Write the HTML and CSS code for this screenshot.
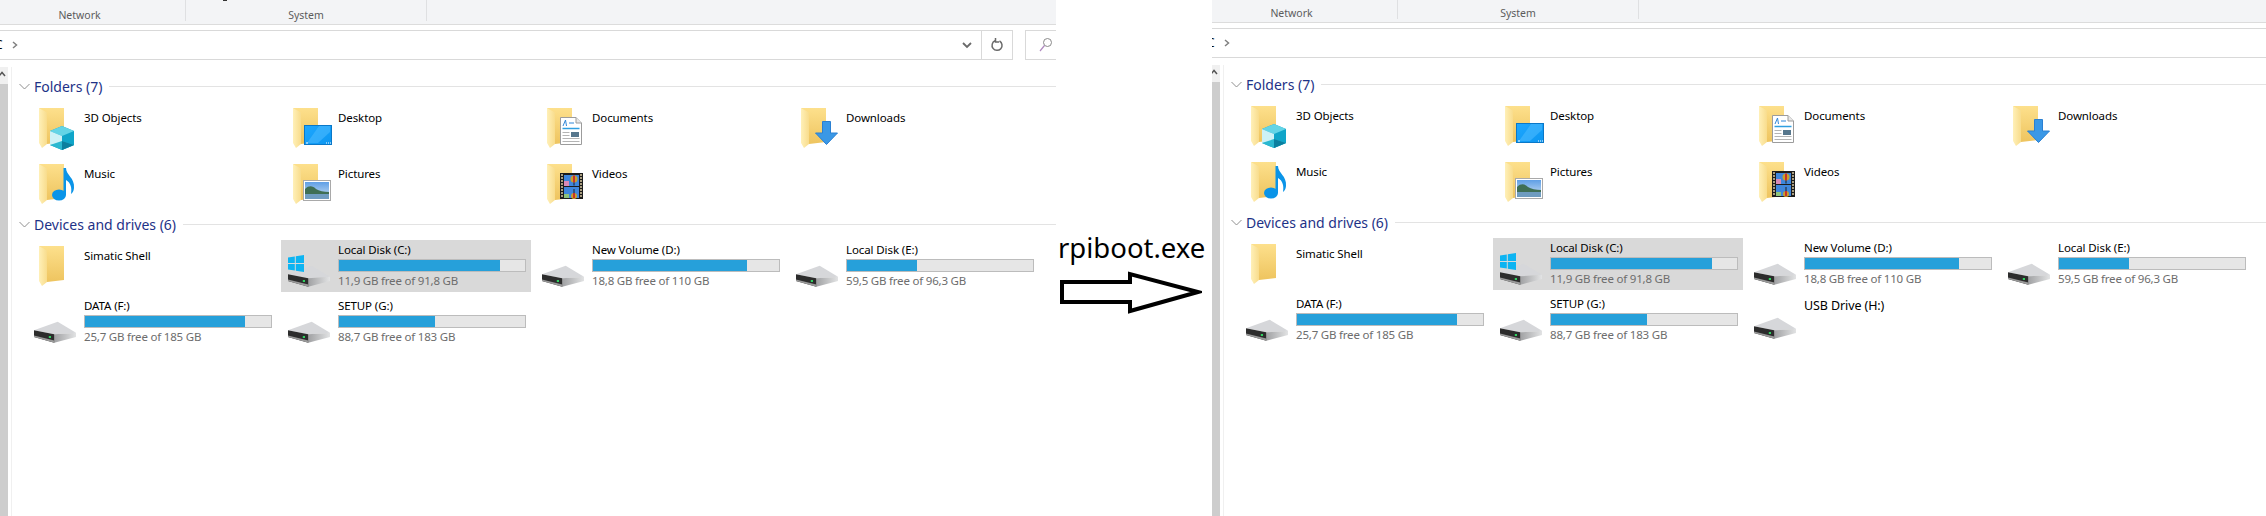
FILE: index.html
```html
<!DOCTYPE html>
<html lang="en">
<head>
<meta charset="utf-8">
<title>rpiboot.exe before and after</title>
<link rel="stylesheet" href="styles.css">
</head>
<body>
<svg class="defs" aria-hidden="true">
  <defs>
    <linearGradient id="g-back" x1="0" y1="0" x2="0" y2="1"><stop offset="0" stop-color="#fde08c"/><stop offset="1" stop-color="#eec45f"/></linearGradient>
    <linearGradient id="g-flap" x1="0" y1="0" x2="1" y2="0"><stop offset="0" stop-color="#fff0b8"/><stop offset="1" stop-color="#f8dc8c"/></linearGradient>
    <linearGradient id="g-desk" x1="0" y1="0" x2="1" y2="1"><stop offset="0" stop-color="#1ea7ff"/><stop offset="1" stop-color="#0c96f0"/></linearGradient>
    <linearGradient id="g-side" x1="0" y1="0" x2="1" y2="0"><stop offset="0" stop-color="#a0a1a3"/><stop offset="1" stop-color="#e2e3e4"/></linearGradient>
    <linearGradient id="g-sky" x1="0" y1="0" x2="0" y2="1"><stop offset="0" stop-color="#5f9fe6"/><stop offset="1" stop-color="#cfe2f3"/></linearGradient>
    <symbol id="folder" viewBox="0 0 50 44" overflow="visible">
      <path d="M5 0H30V34L13 36Z" fill="url(#g-back)"/>
      <path d="M5 0L13 4.500V36L8 40L5 35Z" fill="url(#g-flap)"/>
    </symbol>
    <symbol id="cube" viewBox="0 0 50 44">
      <path d="M28 18L40 23V37L28 42L16 37V23Z" fill="#0fa5c9"/>
      <path d="M28 18L40 23L28 28L16 23Z" fill="#63d4e6"/>
      <path d="M16 23L28 28V36L16 37Z" fill="#cdf1f6"/>
      <path d="M16 37L28 33L40 37L28 42Z" fill="#2bb8d0"/>
      <path d="M28 33L40 37L28 42Z" fill="#0b7f9f"/>
    </symbol>
    <symbol id="screen" viewBox="0 0 50 44">
      <rect x="16.500" y="17.500" width="27" height="19" fill="url(#g-desk)" stroke="#0a78c8"/>
      <path d="M19 35L31 18H42V24L30 35Z" fill="#4fbcff" opacity=".55"/>
      <path d="M18 35h2M38 35h1M40 35h1M42 35h1" stroke="#fff"/>
    </symbol>
    <symbol id="note" viewBox="0 0 50 44">
      <ellipse cx="25" cy="31" rx="7" ry="5.500" fill="#0a94e8"/>
      <path d="M29.500 31V4H32C32 11 41 14 40 24C39.800 27 38.500 29 37 30C38 24 37 19 32 16V31Z" fill="#0a94e8"/>
    </symbol>
    <symbol id="photo" viewBox="0 0 50 44">
      <rect x="15.500" y="16.500" width="27" height="20" fill="#fff" stroke="#a9a9a9"/>
      <rect x="17" y="18" width="24" height="17" fill="url(#g-sky)"/>
      <path d="M17 25C21 21 25 22 28 25C31 27 36 28 41 28V30H17Z" fill="#3f6f55"/>
      <rect x="17" y="30" width="24" height="5" fill="#6f9cc0"/>
    </symbol>
    <symbol id="doc" viewBox="0 0 50 44">
      <path d="M18.500 9.500H34L39.500 15V36.500H18.500Z" fill="#fff" stroke="#9c9c9c"/>
      <path d="M34 9.500V15H39.500" fill="#e8e8e8" stroke="#9c9c9c"/>
      <path d="M21 18L23.500 12L24.500 18M27 15h5" stroke="#2f86d8" fill="none"/>
      <path d="M20.500 20.500H37.500" stroke="#2f9fe0" stroke-width="1.500"/>
      <path d="M20.500 24.500h7M20.500 27.500h7M20.500 30.500h17M20.500 33.500h17" stroke="#b4b4b4"/>
      <rect x="29" y="24" width="8" height="5" fill="#56768c"/>
    </symbol>
    <symbol id="down" viewBox="0 0 50 44">
      <path d="M26.500 13.500H34.500V25H41.500L30.500 36.500L19.500 25H26.500Z" fill="#3a98e6" stroke="#2a80d2"/>
    </symbol>
    <symbol id="film" viewBox="0 0 50 44">
      <rect x="18" y="9" width="23" height="26" fill="#1c1c1c"/>
      <rect x="22" y="11" width="15" height="11" fill="#3f86dc"/>
      <rect x="22" y="23" width="15" height="11" fill="#3f86dc"/>
      <rect x="22" y="17" width="5" height="5" fill="#d98ab8"/>
      <rect x="22" y="30" width="5" height="4" fill="#8fc47a"/>
      <circle cx="32" cy="15" r="3.500" fill="#c9a02a"/>
      <path d="M31 11.500h2v7h-2z" fill="#c8322a"/>
      <path d="M32 18.500v3M32 29v-4" stroke="#222"/>
      <circle cx="32" cy="32" r="3" fill="#c9a02a"/>
      <path d="M31 29h2v5h-2z" fill="#c8322a"/>
      <path d="M19 11h2M19 14h2M19 17h2M19 20h2M19 23h2M19 26h2M19 29h2M19 32h2M38 11h2M38 14h2M38 17h2M38 20h2M38 23h2M38 26h2M38 29h2M38 32h2" stroke="#d8c8a0" stroke-width="1.400"/>
    </symbol>
    <symbol id="drive" viewBox="0 0 50 44">
      <path d="M0 28.300L23.700 19.700L42 30.700L20.300 32.300Z" fill="#d6d7da"/>
      <path d="M20.300 32.300L42 30.700V35L20.300 40.700Z" fill="url(#g-side)"/>
      <path d="M0 28.300L20.300 32.300V40.700L0 35Z" fill="#2c2c2c"/>
      <path d="M0 33.500L20.300 38.500V40.700L0 35Z" fill="#9a9a9a"/>
      <rect x="14.800" y="34" width="2.200" height="2" fill="#30d060"/>
    </symbol>
    <symbol id="win" viewBox="0 0 50 44">
      <path d="M0 11.500L6.800 10.400V17H0ZM7.800 10.200L16 9V17H7.800ZM0 18H6.800V24.500L0 23.500ZM7.800 18H16V26L7.800 24.800Z" fill="#0db4f2"/>
    </symbol>
  </defs>
</svg>

<main class="page">
  <section class="pane pane-before">
    <div class="ribbon ribbon-tall">
      <div class="ribbon-group ribbon-net"><span class="tick"></span>Network</div>
      <div class="ribbon-group ribbon-sys">System</div>
    </div>
    <div class="nav">
      <div class="address">
        <span class="crumb">C</span>
        <svg class="crumb-arrow" viewBox="0 0 6 8"><path d="M1 1L4.500 4L1 7" fill="none" stroke="#808080" stroke-width="1.500"/></svg>
        <span class="grow"></span>
        <svg class="drop" viewBox="0 0 10 7"><path d="M1 1L5 5L9 1" fill="none" stroke="#6a6a6a" stroke-width="1.800"/></svg>
        <span class="refresh"><svg viewBox="0 0 14 16"><path d="M5 3.800A5 5 0 1 0 9.500 4M5.500 1V5H9" fill="none" stroke="#6a6a6a" stroke-width="1.500"/></svg></span>
      </div>
      <div class="search"><svg viewBox="0 0 14 16"><circle cx="8.500" cy="5.500" r="4" fill="none" stroke="#8a8a8a"/><path d="M5.500 8.500L1 14" stroke="#b08ac0" stroke-width="1.200"/></svg></div>
    </div>
    <div class="body">
      <div class="scrollbar"><div class="scroll-up"><svg viewBox="0 0 8 6"><path d="M-1 5L2 1.500L5 5" fill="none" stroke="#555" stroke-width="1.500"/></svg></div></div>
      <div class="view">
        <h2 class="group-head"><svg class="fold" viewBox="0 0 11 7"><path d="M.5 1L5.500 6L10.500 1" fill="none" stroke="#8f8f8f"/></svg><span>Folders (7)</span><i></i></h2>
        <div class="grid">
          <div class="item"><svg class="icon" viewBox="0 0 50 44"><use href="#folder"/><use href="#cube"/></svg><div class="text"><div class="name">3D Objects</div></div></div>
          <div class="item"><svg class="icon" viewBox="0 0 50 44"><use href="#folder"/><use href="#screen"/></svg><div class="text"><div class="name">Desktop</div></div></div>
          <div class="item"><svg class="icon" viewBox="0 0 50 44"><use href="#folder"/><use href="#doc"/></svg><div class="text"><div class="name">Documents</div></div></div>
          <div class="item"><svg class="icon" viewBox="0 0 50 44"><use href="#folder"/><use href="#down"/></svg><div class="text"><div class="name">Downloads</div></div></div>
          <div class="item"><svg class="icon" viewBox="0 0 50 44"><use href="#folder"/><use href="#note"/></svg><div class="text"><div class="name">Music</div></div></div>
          <div class="item"><svg class="icon" viewBox="0 0 50 44"><use href="#folder"/><use href="#photo"/></svg><div class="text"><div class="name">Pictures</div></div></div>
          <div class="item"><svg class="icon" viewBox="0 0 50 44"><use href="#folder"/><use href="#film"/></svg><div class="text"><div class="name">Videos</div></div></div>
        </div>
        <h2 class="group-head group-next"><svg class="fold" viewBox="0 0 11 7"><path d="M.5 1L5.500 6L10.500 1" fill="none" stroke="#8f8f8f"/></svg><span>Devices and drives (6)</span><i></i></h2>
        <div class="grid">
          <div class="item"><svg class="icon" viewBox="0 0 50 44"><use href="#folder"/></svg><div class="text"><div class="name">Simatic Shell</div></div></div>
          <div class="item drive selected"><svg class="icon" viewBox="0 0 50 44"><use href="#drive"/><use href="#win"/></svg><div class="text"><div class="name">Local Disk (C:)</div><div class="bar"><div class="fill" style="width:86.8%"></div></div><div class="sub">11,9 GB free of 91,8 GB</div></div></div>
          <div class="item drive"><svg class="icon" viewBox="0 0 50 44"><use href="#drive"/></svg><div class="text"><div class="name">New Volume (D:)</div><div class="bar"><div class="fill" style="width:83%"></div></div><div class="sub">18,8 GB free of 110 GB</div></div></div>
          <div class="item drive"><svg class="icon" viewBox="0 0 50 44"><use href="#drive"/></svg><div class="text"><div class="name">Local Disk (E:)</div><div class="bar"><div class="fill" style="width:37.4%"></div></div><div class="sub">59,5 GB free of 96,3 GB</div></div></div>
          <div class="item drive"><svg class="icon" viewBox="0 0 50 44"><use href="#drive"/></svg><div class="text"><div class="name">DATA (F:)</div><div class="bar"><div class="fill" style="width:85.8%"></div></div><div class="sub">25,7 GB free of 185 GB</div></div></div>
          <div class="item drive"><svg class="icon" viewBox="0 0 50 44"><use href="#drive"/></svg><div class="text"><div class="name">SETUP (G:)</div><div class="bar"><div class="fill" style="width:51.7%"></div></div><div class="sub">88,7 GB free of 183 GB</div></div></div>
        </div>
      </div>
    </div>
  </section>

  <aside class="middle">
    <div class="caption">rpiboot.exe</div>
    <svg class="arrow" viewBox="0 0 143 45"><path d="M3 12H71V4L139 22L71 41V32H3Z" fill="#fff" stroke="#000" stroke-width="4"/></svg>
  </aside>

  <section class="pane pane-after">
    <div class="ribbon">
      <div class="ribbon-group ribbon-net">Network</div>
      <div class="ribbon-group ribbon-sys">System</div>
    </div>
    <div class="nav">
      <div class="address address-open">
        <span class="crumb">C</span>
        <svg class="crumb-arrow" viewBox="0 0 6 8"><path d="M1 1L4.500 4L1 7" fill="none" stroke="#808080" stroke-width="1.500"/></svg>
      </div>
    </div>
    <div class="body">
      <div class="scrollbar"><div class="scroll-up"><svg viewBox="0 0 8 6"><path d="M-1 5L2 1.500L5 5" fill="none" stroke="#555" stroke-width="1.500"/></svg></div></div>
      <div class="view">
        <h2 class="group-head"><svg class="fold" viewBox="0 0 11 7"><path d="M.5 1L5.500 6L10.500 1" fill="none" stroke="#8f8f8f"/></svg><span>Folders (7)</span><i></i></h2>
        <div class="grid">
          <div class="item"><svg class="icon" viewBox="0 0 50 44"><use href="#folder"/><use href="#cube"/></svg><div class="text"><div class="name">3D Objects</div></div></div>
          <div class="item"><svg class="icon" viewBox="0 0 50 44"><use href="#folder"/><use href="#screen"/></svg><div class="text"><div class="name">Desktop</div></div></div>
          <div class="item"><svg class="icon" viewBox="0 0 50 44"><use href="#folder"/><use href="#doc"/></svg><div class="text"><div class="name">Documents</div></div></div>
          <div class="item"><svg class="icon" viewBox="0 0 50 44"><use href="#folder"/><use href="#down"/></svg><div class="text"><div class="name">Downloads</div></div></div>
          <div class="item"><svg class="icon" viewBox="0 0 50 44"><use href="#folder"/><use href="#note"/></svg><div class="text"><div class="name">Music</div></div></div>
          <div class="item"><svg class="icon" viewBox="0 0 50 44"><use href="#folder"/><use href="#photo"/></svg><div class="text"><div class="name">Pictures</div></div></div>
          <div class="item"><svg class="icon" viewBox="0 0 50 44"><use href="#folder"/><use href="#film"/></svg><div class="text"><div class="name">Videos</div></div></div>
        </div>
        <h2 class="group-head group-next"><svg class="fold" viewBox="0 0 11 7"><path d="M.5 1L5.500 6L10.500 1" fill="none" stroke="#8f8f8f"/></svg><span>Devices and drives (6)</span><i></i></h2>
        <div class="grid">
          <div class="item"><svg class="icon" viewBox="0 0 50 44"><use href="#folder"/></svg><div class="text"><div class="name">Simatic Shell</div></div></div>
          <div class="item drive selected"><svg class="icon" viewBox="0 0 50 44"><use href="#drive"/><use href="#win"/></svg><div class="text"><div class="name">Local Disk (C:)</div><div class="bar"><div class="fill" style="width:86.8%"></div></div><div class="sub">11,9 GB free of 91,8 GB</div></div></div>
          <div class="item drive"><svg class="icon" viewBox="0 0 50 44"><use href="#drive"/></svg><div class="text"><div class="name">New Volume (D:)</div><div class="bar"><div class="fill" style="width:83%"></div></div><div class="sub">18,8 GB free of 110 GB</div></div></div>
          <div class="item drive"><svg class="icon" viewBox="0 0 50 44"><use href="#drive"/></svg><div class="text"><div class="name">Local Disk (E:)</div><div class="bar"><div class="fill" style="width:37.4%"></div></div><div class="sub">59,5 GB free of 96,3 GB</div></div></div>
          <div class="item drive"><svg class="icon" viewBox="0 0 50 44"><use href="#drive"/></svg><div class="text"><div class="name">DATA (F:)</div><div class="bar"><div class="fill" style="width:85.8%"></div></div><div class="sub">25,7 GB free of 185 GB</div></div></div>
          <div class="item drive"><svg class="icon" viewBox="0 0 50 44"><use href="#drive"/></svg><div class="text"><div class="name">SETUP (G:)</div><div class="bar"><div class="fill" style="width:51.7%"></div></div><div class="sub">88,7 GB free of 183 GB</div></div></div>
          <div class="item drive drive-empty"><svg class="icon" viewBox="0 0 50 44"><use href="#drive"/></svg><div class="text"><div class="name">USB Drive (H:)</div></div></div>
        </div>
      </div>
    </div>
  </section>
</main>
</body>
</html>
```
FILE: styles.css
```css
html, body {
  margin: 0;
  background: #fff;
}
body {
  width: 2266px;
  height: 516px;
  overflow: hidden;
  font-family: "Noto Sans", "Open Sans", sans-serif;
  font-size: 11.5px;
  color: #000;
}
.defs {
  position: absolute;
  width: 0;
  height: 0;
}
.page {
  display: flex;
  height: 516px;
}
.pane {
  display: flex;
  flex-direction: column;
  overflow: hidden;
  flex: none;
}
.pane-before { width: 1056px; }
.pane-after { width: 1054px; }

/* ribbon */
.ribbon {
  display: flex;
  flex: none;
  height: 22px;
  background: #f3f4f6;
  border-bottom: 1px solid #dcdcdc;
}
.ribbon-tall { height: 24px; }
.ribbon-group {
  position: relative;
  height: 19px;
  box-sizing: border-box;
  padding-top: 5px;
  text-align: center;
  line-height: 16px;
  font-size: 10.5px;
  color: #5c5c5c;
  border-right: 1px solid #dfe0e2;
}
.ribbon-tall .ribbon-group {
  height: 21px;
  padding-top: 7px;
}
.ribbon-net { width: 186px; padding-right: 26px; }
.ribbon-sys { width: 241px; }
.tick {
  position: absolute;
  top: 0;
  left: 223px;
  width: 4px;
  height: 1px;
  background: #333;
}

/* navigation bar */
.nav {
  display: flex;
  flex: none;
  gap: 12px;
  height: 30px;
  margin-top: 5px;
}
.address {
  display: flex;
  align-items: center;
  width: 1013px;
  box-sizing: border-box;
  border: 1px solid #d9d9d9;
  border-left: 0;
}
.address-open {
  width: 100%;
  border-right: 0;
}
.crumb {
  margin-left: -5px;
  width: 12px;
  font-size: 12px;
  line-height: 16px;
}
.crumb-arrow {
  width: 6px;
  height: 8px;
  margin-left: 5px;
}
.grow { flex: 1; }
.drop {
  width: 10px;
  height: 7px;
  margin-right: 9px;
}
.refresh {
  display: flex;
  align-items: center;
  justify-content: center;
  width: 30px;
  height: 28px;
  border-left: 1px solid #d9d9d9;
}
.refresh svg {
  width: 14px;
  height: 16px;
}
.search {
  display: flex;
  align-items: center;
  justify-content: flex-end;
  flex: 1;
  box-sizing: border-box;
  padding-right: 3px;
  border: 1px solid #d9d9d9;
  border-right: 0;
}
.search svg {
  width: 14px;
  height: 16px;
}

/* content */
.body {
  display: flex;
  flex: 1;
  margin-top: 7px;
}
.scrollbar {
  flex: none;
  width: 8px;
  margin-right: 3px;
  background: #cdcdcd;
}
.scroll-up {
  height: 17px;
  background: #f0f0f0;
}
.scroll-up svg {
  display: block;
  width: 8px;
  height: 6px;
  margin-top: 0;
  padding-top: 4px;
}
.view {
  flex: 1;
  padding: 9px 0 0 7px;
  border-left: 1px solid #f0f0f0;
}
.group-head {
  display: flex;
  align-items: center;
  height: 21px;
  margin: 0 0 5px;
  font-size: 14px;
  font-weight: 400;
  line-height: 21px;
  color: #1e3287;
}
.group-next { margin-top: 4px; }
.group-head .fold {
  width: 11px;
  height: 7px;
  margin-right: 4px;
}
.group-head i {
  flex: 1;
  height: 1px;
  margin-left: 7px;
  background: #e3e3e3;
}
.grid {
  display: grid;
  grid-template-columns: repeat(4, 250px);
  grid-auto-rows: 52px;
  gap: 4px;
  margin-left: 8px;
}
.item {
  display: flex;
  padding-left: 7px;
}
.icon {
  flex: none;
  width: 50px;
  height: 44px;
  margin-top: 6px;
  overflow: visible;
}
.text {
  display: flex;
  flex-direction: column;
  width: 188px;
  padding-top: 8px;
}
.drive .text { padding-top: 2px; }
.name,
.sub {
  height: 16px;
  line-height: 16px;
  white-space: nowrap;
}
.name { letter-spacing: -.1px; }
.sub {
  letter-spacing: -.2px;
  color: #6d6d6d;
}
.bar {
  flex: none;
  box-sizing: border-box;
  height: 13px;
  margin: 1px 0;
  background: #e6e6e6;
  border: 1px solid #bcbcbc;
}
.fill {
  height: 100%;
  background: #26a0da;
}
.selected { background: #d9d9d9; }
.drive-empty .text { padding-top: 4px; }
.drive-empty .name {
  font-size: 12.500px;
}
.drive-empty .icon { margin-top: 4px; }

/* centre caption */
.middle {
  flex: none;
  width: 156px;
  box-sizing: border-box;
  padding: 233px 0 0 2px;
}
.caption {
  font-size: 27.500px;
  line-height: 30px;
  white-space: nowrap;
}
.arrow {
  display: block;
  width: 143px;
  height: 45px;
  margin-top: 7px;
  margin-left: 1px;
}
```
